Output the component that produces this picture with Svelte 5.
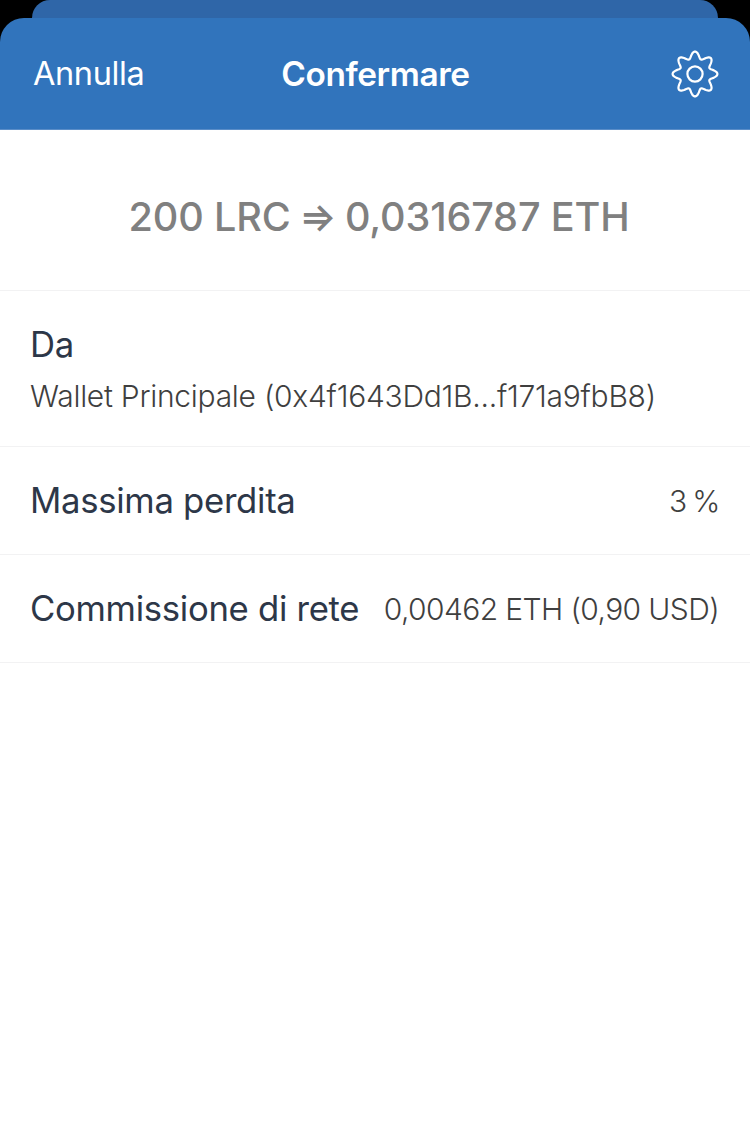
<script>
	// wavy outline for the settings gear, 8 teeth
	const gearPath = (() => {
		const pts = [];
		for (let i = 0; i < 240; i++) {
			const a = (i / 240) * Math.PI * 2;
			const r = 19 + 3.4 * Math.cos(8 * a);
			pts.push(`${(24 + r * Math.sin(a)).toFixed(2)} ${(24 - r * Math.cos(a)).toFixed(2)}`);
		}
		return 'M' + pts.join('L') + 'Z';
	})();
</script>

<div class="page">
	<div class="back-card"></div>
	<header class="bar">
		<span class="cancel">Annulla</span>
		<span class="title">Confermare</span>
		<svg class="gear" width="48" height="48" viewBox="0 0 48 48" fill="none" stroke="#fff" stroke-width="2.2">
			<path d={gearPath} />
			<circle cx="24" cy="24" r="7.6" />
		</svg>
	</header>

	<main class="sheet">
		<div class="amount"><span>200 LRC <span class="arrow">⇒</span> 0,0316787 ETH</span></div>

		<div class="row from">
			<div class="label">Da</div>
			<div class="value">Wallet Principale (0x4f1643Dd1B...f171a9fbB8)</div>
		</div>
		<div class="row line">
			<div class="label">Massima perdita</div>
			<div class="value pct">3 %</div>
		</div>
		<div class="row line fee">
			<div class="label">Commissione di rete</div>
			<div class="value">0,00462 ETH (0,90 USD)</div>
		</div>
	</main>
</div>

<style>
	:global(body) {
		background: #000;
	}

	.page {
		width: 750px;
		height: 1128px;
		overflow: hidden;
		display: flex;
		flex-direction: column;
		background: #000;
		font-family: Inter, 'Liberation Sans', sans-serif;
	}

	.back-card {
		flex: none;
		height: 18px;
		margin: 0 32px;
		background: #2f66a8;
		border-radius: 18px 18px 0 0;
	}

	.bar {
		flex: none;
		height: 112px;
		box-sizing: border-box;
		padding: 0 32px 0 33px;
		display: grid;
		grid-template-columns: 1fr auto 1fr;
		align-items: center;
		background: #3174bc;
		border-radius: 24px 24px 0 0;
		border-bottom: 1px solid #5a8dc8;
		color: #fff;
	}

	.cancel {
		font-size: 32.5px;
		letter-spacing: -0.4px;
	}

	.title {
		font-size: 33.4px;
		font-weight: 600;
		letter-spacing: -0.4px;
	}

	.gear {
		justify-self: end;
		margin-right: -1px;
	}

	.sheet {
		flex: 1;
		background: #fff;
		color: #2d3748;
	}

	.amount {
		height: 161px;
		box-sizing: border-box;
		padding: 13px 0 0 8px;
		display: flex;
		align-items: center;
		justify-content: center;
		border-bottom: 1px solid #f2f2f3;
		font-size: 39.6px;
		font-weight: 500;
		letter-spacing: -0.15px;
		color: #808080;
	}

	.arrow {
		margin: 0 -2px;
	}

	.row {
		border-bottom: 1px solid #f2f2f3;
		box-sizing: border-box;
		padding: 0 30px;
	}

	.label {
		font-size: 34.7px;
		letter-spacing: -0.3px;
	}

	.value {
		font-size: 30px;
		font-weight: 300;
		letter-spacing: -0.27px;
		color: #3f3f3f;
	}

	.from {
		height: 156px;
		padding-top: 32px;
	}

	.from .value {
		margin-top: 13px;
	}

	.line {
		height: 108px;
		display: flex;
		align-items: center;
		justify-content: space-between;
	}

	.line .label {
		margin-top: -2px;
	}

	.pct {
		word-spacing: -3px;
	}

	.fee {
		padding-right: 31px;
	}

	.fee .value {
		letter-spacing: -0.6px;
	}
</style>
